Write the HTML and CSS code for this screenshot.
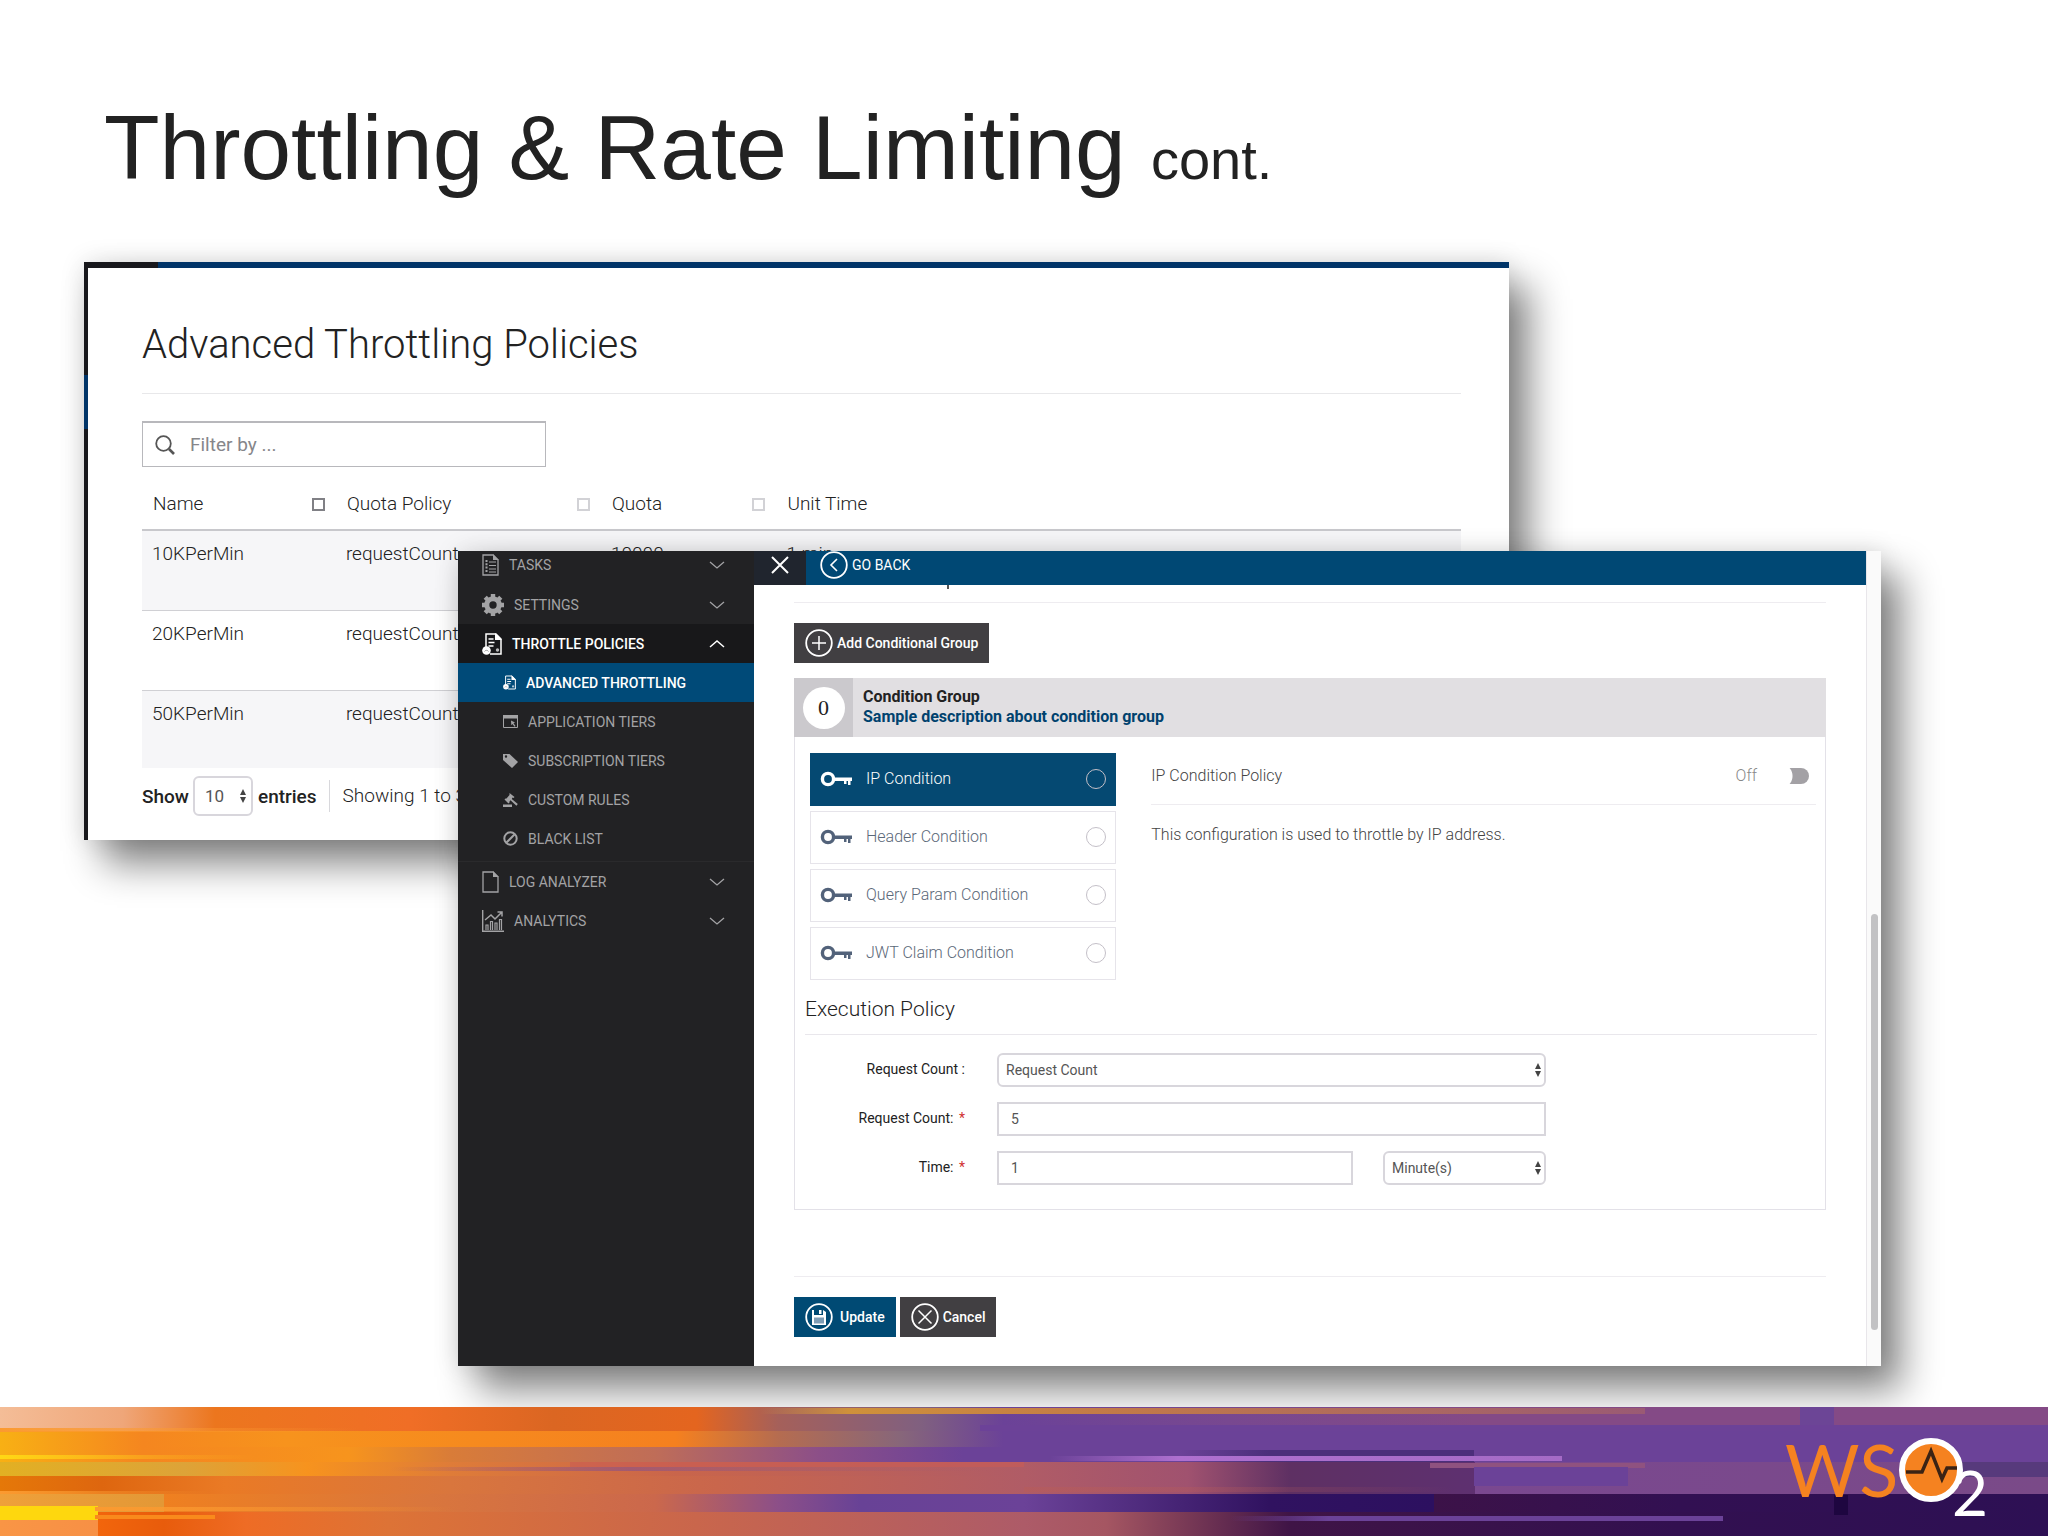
FILE: index.html
```html
<!DOCTYPE html>
<html lang="en">
<head>
    <meta charset="UTF-8">
    <meta name="viewport" content="width=device-width, initial-scale=1.0">
    <title>Throttling &amp; Rate Limiting</title>
    <link rel="stylesheet" href="styles.css">
</head>
<body>
    <!-- shared icons -->
    <svg class="defs" width="0" height="0" aria-hidden="true">
        <symbol id="down" viewBox="0 0 16 10"><path d="M1 2l7 6 7-6" fill="none" stroke="currentColor" stroke-width="1.3"/></symbol>
        <symbol id="up" viewBox="0 0 16 10"><path d="M1 8l7-6 7 6" fill="none" stroke="currentColor" stroke-width="1.5"/></symbol>
        <symbol id="updown" viewBox="0 0 8 14"><path d="M4 0l3 6H1zM4 14l3-6H1z" fill="#444"/></symbol>
        <symbol id="key" viewBox="0 0 32 16">
            <circle cx="8" cy="8" r="5.6" fill="none" stroke="currentColor" stroke-width="3.4"/>
            <path d="M14 6.500h18v3.500h-1.500v4h-2.500v-4h-1.500v3h-2.500v-3H14z" fill="currentColor"/>
        </symbol>
        <symbol id="policy" viewBox="0 0 20 22">
            <path d="M4 15V1h10l5 5v15H8" fill="none" stroke="currentColor" stroke-width="1.5"/>
            <path d="M13 0l7 7h-7z" fill="currentColor"/>
            <path d="M6.500 6h5M6.500 9.500h6M6.500 13h5" stroke="currentColor" stroke-width="1.6"/>
            <circle cx="15.500" cy="17" r="1.700" fill="currentColor" opacity=".7"/>
            <circle cx="4.500" cy="17.500" r="4.300" fill="currentColor"/>
            <path d="M2.500 18.500a2.300 2.300 0 0 1 4 0" fill="none" stroke="#888" stroke-width=".8"/>
        </symbol>
    </svg>

    <header>
        <h1>Throttling &amp; Rate Limiting <small>cont.</small></h1>
    </header>

    <main class="stage">
        <section class="window policies">
            <h2>Advanced Throttling Policies</h2>
            <div class="search">
                <svg width="20" height="20" viewBox="0 0 20 20"><circle cx="8.500" cy="8.500" r="7.300" fill="none" stroke="#555" stroke-width="1.800"/><path d="M14 14l5 5" stroke="#555" stroke-width="2.600"/></svg>
                <input type="text" aria-label="Filter" placeholder="Filter by ...">
            </div>
            <table>
                <thead>
                    <tr>
                        <th class="col-name"><div class="sort">Name <span class="box dark"></span></div></th>
                        <th class="col-policy"><div class="sort">Quota Policy <span class="box"></span></div></th>
                        <th class="col-quota"><div class="sort">Quota <span class="box"></span></div></th>
                        <th>Unit Time</th>
                    </tr>
                </thead>
                <tbody>
                    <tr><td>10KPerMin</td><td>requestCount</td><td>10000</td><td>1 min</td></tr>
                    <tr><td>20KPerMin</td><td>requestCount</td><td></td><td></td></tr>
                    <tr><td>50KPerMin</td><td>requestCount</td><td></td><td></td></tr>
                </tbody>
            </table>
            <div class="pager">
                <label for="entries">Show</label>
                <span class="select">
                    <select id="entries"><option>10</option></select>
                    <svg width="8" height="14"><use href="#updown"/></svg>
                </span>
                <span class="entries">entries</span>
                <span class="showing">Showing 1 to 3</span>
            </div>
        </section>

        <section class="window editor">
            <nav>
                <a href="#tasks" class="first">
                    <svg width="17" height="22" viewBox="0 0 17 22"><path d="M1 1h10l5 5v15H1z" fill="none" stroke="currentColor" stroke-width="1.300"/><path d="M11 0l6 6h-6z" fill="currentColor"/><path d="M7 8h7M7 11.500h7M7 15h7M7 18h7" stroke="currentColor" stroke-width="1.200"/><path d="M4.500 6v13" stroke="currentColor" stroke-width="2" stroke-dasharray="2 1.300"/></svg>
                    TASKS <svg class="arrow" width="16" height="10"><use href="#down"/></svg>
                </a>
                <a href="#settings">
                    <svg width="22" height="22" viewBox="0 0 22 22"><circle cx="11" cy="11" r="6.200" fill="none" stroke="currentColor" stroke-width="5"/><path d="M11 0v4M11 18v4M0 11h4M18 11h4M3.200 3.200l3 3M15.800 15.800l3 3M3.200 18.800l3-3M15.800 6.200l3-3" stroke="currentColor" stroke-width="4.400"/></svg>
                    SETTINGS <svg class="arrow" width="16" height="10"><use href="#down"/></svg>
                </a>
                <a href="#throttle" class="open">
                    <svg width="20" height="22"><use href="#policy"/></svg>
                    THROTTLE POLICIES <svg class="arrow" width="16" height="10"><use href="#up"/></svg>
                </a>
                <div class="submenu">
                    <a href="#advanced" class="active"><svg width="13" height="15"><use href="#policy"/></svg> ADVANCED THROTTLING</a>
                    <a href="#application"><svg width="15" height="13" viewBox="0 0 15 13"><path d="M.5.5h14v12H.5z" fill="none" stroke="currentColor"/><path d="M0 0h15v3.500H0zM8 5.500l4 2-1.500.8 2 2.700-1 .8-2-2.800-1.200 1.200z" fill="currentColor"/></svg> APPLICATION TIERS</a>
                    <a href="#subscription"><svg width="15" height="15" viewBox="0 0 15 15"><path fill-rule="evenodd" d="M0 1h6.500L15 9l-6 6L0 7zM1.800 3.500a1.200 1.200 0 1 0 2.400 0 1.200 1.200 0 1 0-2.400 0z" fill="currentColor"/></svg> SUBSCRIPTION TIERS</a>
                    <a href="#custom"><svg width="15" height="14" viewBox="0 0 15 14"><path d="M6.500 0l5 4-1 1-1-.4L8.800 6l6 5-1.400 1.700L7.500 7.300 6.500 8.400v1.200L5.500 10.500 1.500 6.500l1-1h1L6.500 2zM0 11.500h9V14H0z" fill="currentColor"/></svg> CUSTOM RULES</a>
                    <a href="#black"><svg width="15" height="15" viewBox="0 0 15 15"><circle cx="7.500" cy="7.500" r="6.200" fill="none" stroke="currentColor" stroke-width="2"/><path d="M3.500 11.500l8-8" stroke="currentColor" stroke-width="2"/></svg> BLACK LIST</a>
                </div>
                <a href="#log">
                    <svg width="17" height="22" viewBox="0 0 17 22"><path d="M1 1h10l5 5v15H1z" fill="none" stroke="currentColor" stroke-width="1.300"/><path d="M11 0l6 6h-6z" fill="currentColor"/></svg>
                    LOG ANALYZER <svg class="arrow" width="16" height="10"><use href="#down"/></svg>
                </a>
                <a href="#analytics">
                    <svg width="22" height="22" viewBox="0 0 22 22"><path d="M.7 0v21.300H22" fill="none" stroke="currentColor" stroke-width="1.400"/><path d="M4 20v-5h2v5M8.500 20V11.500h2V20M13 20v-7h2v7M17.500 20V9.500h2V20" fill="none" stroke="currentColor" stroke-width="1.200"/><path d="M3 10l6-5 4 4 7-7M15.500 2H20v4.500" fill="none" stroke="currentColor" stroke-width="1.500"/></svg>
                    ANALYTICS <svg class="arrow" width="16" height="10"><use href="#down"/></svg>
                </a>
            </nav>

            <div class="content">
                <div class="topbar">
                    <button type="button" class="close" aria-label="Close"><svg width="18" height="18" viewBox="0 0 18 18"><path d="M1 1l16 16M17 1L1 17" stroke="#fff" stroke-width="2"/></svg></button>
                    <a href="#back"><svg width="28" height="28" viewBox="0 0 28 28"><circle cx="14" cy="14" r="12.800" fill="none" stroke="#fff" stroke-width="1.800"/><path d="M17 8l-6 6 6 6" fill="none" stroke="#fff" stroke-width="1.600"/></svg>GO BACK</a>
                </div>

                <form class="page">
                    <div class="stub"><span></span></div>
                    <hr>
                    <button type="button" class="btn add"><svg width="28" height="28" viewBox="0 0 28 28"><circle cx="14" cy="14" r="12.800" fill="none" stroke="#fff" stroke-width="1.800"/><path d="M7 14h14M14 7v14" stroke="#fff" stroke-width="1.500"/></svg>Add Conditional Group</button>

                    <div class="group">
                        <div class="group-head">
                            <div class="number"><span>0</span></div>
                            <div class="group-title">
                                <h3>Condition Group</h3>
                                <p>Sample description about condition group</p>
                            </div>
                        </div>
                        <div class="conditions">
                            <div class="list">
                                <label class="item selected"><svg width="32" height="16"><use href="#key"/></svg>IP Condition<input type="radio" name="condition"></label>
                                <label class="item"><svg width="32" height="16"><use href="#key"/></svg>Header Condition<input type="radio" name="condition"></label>
                                <label class="item"><svg width="32" height="16"><use href="#key"/></svg>Query Param Condition<input type="radio" name="condition"></label>
                                <label class="item"><svg width="32" height="16"><use href="#key"/></svg>JWT Claim Condition<input type="radio" name="condition"></label>
                            </div>
                            <div class="detail">
                                <div class="detail-head">
                                    <span>IP Condition Policy</span>
                                    <label class="off">Off <input type="checkbox"></label>
                                </div>
                                <p>This configuration is used to throttle by IP address.</p>
                            </div>
                        </div>

                        <div class="execution">
                            <h4>Execution Policy</h4>
                            <div class="fields">
                                <label for="type">Request Count :</label>
                                <span class="select">
                                    <select id="type"><option>Request Count</option></select>
                                    <svg width="8" height="14"><use href="#updown"/></svg>
                                </span>
                                <label for="count">Request Count: <b>*</b></label>
                                <input type="text" id="count" value="5">
                                <label for="time">Time: <b>*</b></label>
                                <div class="time">
                                    <input type="text" id="time" value="1">
                                    <span class="select">
                                        <select aria-label="Time unit"><option>Minute(s)</option></select>
                                        <svg width="8" height="14"><use href="#updown"/></svg>
                                    </span>
                                </div>
                            </div>
                        </div>
                    </div>

                    <hr>
                    <div class="actions">
                        <button type="submit" class="btn update"><svg width="28" height="28" viewBox="0 0 28 28"><circle cx="14" cy="14" r="12.800" fill="none" stroke="#fff" stroke-width="1.800"/><path d="M7 7h2v5h9V7l3 2v13H7z" fill="#fff"/><path d="M14 7h2.500v4H14z" fill="#fff"/><path d="M9 14.500h10v6H9z" fill="#7f9db5"/></svg>Update</button>
                        <button type="button" class="btn"><svg width="28" height="28" viewBox="0 0 28 28"><circle cx="14" cy="14" r="12.800" fill="none" stroke="#fff" stroke-width="1.800"/><path d="M7.500 7.500l13 13M20.500 7.500l-13 13" stroke="#fff" stroke-width="1.500"/></svg>Cancel</button>
                    </div>
                </form>
            </div>
            <div class="scroll"><span></span></div>
        </section>
    </main>

    <footer>
        <svg class="stripes" viewBox="0 0 2048 130" preserveAspectRatio="none" aria-hidden="true">
            <defs>
                <linearGradient id="g1"><stop offset="0" stop-color="#f4bd97"/><stop offset=".06" stop-color="#efa679"/><stop offset=".105" stop-color="#ec761e"/><stop offset=".2" stop-color="#f06e26"/><stop offset=".27" stop-color="#db6622"/><stop offset=".34" stop-color="#e4651f"/><stop offset=".38" stop-color="#a5605a"/><stop offset=".45" stop-color="#806080"/><stop offset=".49" stop-color="#6b4298"/><stop offset=".6" stop-color="#784890"/><stop offset=".72" stop-color="#844a86"/><stop offset="1" stop-color="#844a86"/></linearGradient>
                <linearGradient id="g2"><stop offset="0" stop-color="#f8b014"/><stop offset=".07" stop-color="#f5861f"/><stop offset=".14" stop-color="#f7931d"/><stop offset=".33" stop-color="#f5801f"/><stop offset=".38" stop-color="#b56c50"/><stop offset=".44" stop-color="#87667a"/><stop offset=".49" stop-color="#6b4298"/><stop offset="1" stop-color="#6b4298"/></linearGradient>
                <linearGradient id="g3"><stop offset="0" stop-color="#f8b014"/><stop offset=".07" stop-color="#f5861f"/><stop offset=".17" stop-color="#f7941d"/><stop offset=".22" stop-color="#d97c38"/><stop offset=".32" stop-color="#bf6d58"/><stop offset=".4" stop-color="#8c4f88"/><stop offset=".47" stop-color="#6b4298"/><stop offset="1" stop-color="#6b4298"/></linearGradient>
                <linearGradient id="g4"><stop offset="0" stop-color="#e2b023"/><stop offset=".09" stop-color="#dda338"/><stop offset=".15" stop-color="#f7931e"/><stop offset=".22" stop-color="#df7c38"/><stop offset=".33" stop-color="#c9654b"/><stop offset=".5" stop-color="#b05c66"/><stop offset=".58" stop-color="#a0526f"/><stop offset=".63" stop-color="#5e3063"/><stop offset=".72" stop-color="#5e3070"/><stop offset=".72" stop-color="#7a4890"/><stop offset="1" stop-color="#7a4a88"/></linearGradient>
                <linearGradient id="g5"><stop offset="0" stop-color="#e57808"/><stop offset=".05" stop-color="#de660f"/><stop offset=".11" stop-color="#ea7a25"/><stop offset=".22" stop-color="#d9763d"/><stop offset=".35" stop-color="#c9664c"/><stop offset=".5" stop-color="#b05c66"/><stop offset=".58" stop-color="#a0526f"/><stop offset=".63" stop-color="#5e3063"/><stop offset=".72" stop-color="#5e3070"/><stop offset=".72" stop-color="#7a4890"/><stop offset="1" stop-color="#7a4a88"/></linearGradient>
                <linearGradient id="g6"><stop offset="0" stop-color="#efa03a"/><stop offset=".08" stop-color="#e39836"/><stop offset=".08" stop-color="#ef8020"/><stop offset=".21" stop-color="#d9763d"/><stop offset=".32" stop-color="#cb684c"/><stop offset=".38" stop-color="#8c4f88"/><stop offset=".42" stop-color="#684296"/><stop offset=".5" stop-color="#6b4298"/><stop offset=".62" stop-color="#301260"/><stop offset=".7" stop-color="#2c1060"/><stop offset=".7" stop-color="#3c1248"/><stop offset=".82" stop-color="#321052"/><stop offset="1" stop-color="#2d1054"/></linearGradient>
                <linearGradient id="g7"><stop offset="0" stop-color="#f99545"/><stop offset=".048" stop-color="#f79045"/><stop offset=".048" stop-color="#f2650c"/><stop offset=".08" stop-color="#e85c0c"/><stop offset=".12" stop-color="#ee6c25"/><stop offset=".19" stop-color="#dd7336"/><stop offset=".34" stop-color="#c9664c"/><stop offset=".5" stop-color="#ad5b68"/><stop offset=".54" stop-color="#a55662"/><stop offset=".63" stop-color="#3f1446"/><stop offset=".82" stop-color="#321050"/><stop offset="1" stop-color="#2d1054"/></linearGradient>
                <linearGradient id="top"><stop offset="0" stop-color="#d8953a" stop-opacity="0"/><stop offset=".1" stop-color="#cf913a"/><stop offset=".4" stop-color="#c27a48"/><stop offset="1" stop-color="#9a5a74"/></linearGradient>
                <linearGradient id="lilac"><stop offset="0" stop-color="#ae70cf" stop-opacity="0"/><stop offset=".25" stop-color="#ae70cf"/><stop offset="1" stop-color="#a56bc6"/></linearGradient>
                <linearGradient id="violet"><stop offset="0" stop-color="#6b4298" stop-opacity="0"/><stop offset=".2" stop-color="#6b4298"/></linearGradient>
                <linearGradient id="shade"><stop offset="0" stop-color="#4c2f7b" stop-opacity="0"/><stop offset=".3" stop-color="#4c2f7b"/></linearGradient>
                <linearGradient id="glow"><stop offset="0" stop-color="#fb9a30"/><stop offset="1" stop-color="#fb9a30" stop-opacity="0"/></linearGradient>
                <linearGradient id="gold"><stop offset="0" stop-color="#ffd814"/><stop offset="1" stop-color="#ffb020" stop-opacity="0"/></linearGradient>
                <linearGradient id="mauve"><stop offset="0" stop-color="#a35a70" stop-opacity="0"/><stop offset=".4" stop-color="#a35a70"/><stop offset="1" stop-color="#a35a70" stop-opacity="0"/></linearGradient>
                <linearGradient id="rust"><stop offset="0" stop-color="#b85c58" stop-opacity=".5"/><stop offset="1" stop-color="#b85c58" stop-opacity="0"/></linearGradient>
            </defs>
            <rect width="2048" height="24" fill="url(#g1)"/>
            <rect x="1800" width="34" height="24" fill="#6c4596"/>
            <rect x="760" y="1" width="885" height="6" fill="url(#top)"/>
            <rect x="980" y="18" width="1068" height="8" fill="#6c4298"/>
            <rect y="24" width="2048" height="17" fill="url(#g2)"/>
            <rect y="21" width="360" height="4" fill="url(#glow)"/>
            <rect y="40" width="2048" height="16" fill="url(#g3)"/>
            <rect y="48" width="255" height="4" fill="url(#gold)"/>
            <rect y="55" width="2048" height="15" fill="url(#g4)"/>
            <rect x="570" y="55" width="454" height="5" fill="#c95c55" opacity=".6"/>
            <rect x="390" y="60" width="600" height="4" fill="url(#mauve)"/>
            <rect y="69" width="2048" height="18" fill="url(#g5)"/>
            <rect y="84" width="210" height="3" fill="url(#glow)"/>
            <rect y="87" width="2048" height="19" fill="url(#g6)"/>
            <rect y="105" width="2048" height="25" fill="url(#g7)"/>
            <rect y="99" width="98" height="14" fill="#fed70e"/>
            <rect x="95" y="100" width="360" height="4" fill="url(#glow)"/>
            <rect x="95" y="108" width="120" height="4" fill="#f98a1c"/>
            <rect x="1180" y="43" width="294" height="12" fill="url(#shade)"/>
            <rect x="1050" y="49" width="512" height="5" fill="url(#lilac)"/>
            <rect x="1430" y="56" width="215" height="5" fill="#8f5280"/>
            <rect x="1474" y="60" width="154" height="19" fill="#6b4298"/>
            <rect x="1900" y="55" width="148" height="15" fill="#573a7c"/>
            <rect x="1024" y="80" width="430" height="5" fill="url(#rust)"/>
            <rect x="1230" y="109" width="493" height="5" fill="url(#violet)"/>
            <rect x="1834" y="88" width="14" height="20" fill="#1e0640"/>
        </svg>
        <svg class="logo" width="204" height="90" viewBox="0 0 204 90" role="img" aria-label="WSO2">
            <text class="brand" x="1" y="66">WS</text>
            <circle cx="147" cy="39" r="29" fill="#f58220" stroke="#fff" stroke-width="6"/>
            <path d="M122 41h16l9-21 11 28 5-11h10" fill="none" stroke="#3b2314" stroke-width="3.500"/>
            <text class="two" x="168" y="85">2</text>
        </svg>
    </footer>
</body>
</html>
```
FILE: styles.css
```css
* {
    box-sizing: border-box;
}

body {
    font-family: Roboto, "Liberation Sans", sans-serif;
    background-color: white;
    color: #222;
    margin: 0;
    min-height: 100vh;
    display: flex;
    flex-direction: column;
}

h1, h2, h3, h4, p {
    margin: 0;
    font-weight: normal;
}

button, input, select {
    font-family: inherit;
    color: inherit;
}

a {
    color: inherit;
    text-decoration: none;
}

svg {
    flex: none;
}

hr {
    border: 0;
    border-top: 1px solid #eeecf0;
    margin: 0;
}

.defs {
    position: absolute;
}

header {
    padding: 96px 104px 50px;
}

h1 {
    font-family: "Liberation Sans", Arial, sans-serif;
    font-size: 91px;
    line-height: 104px;
}

h1 small {
    font-size: 56px;
}

/* the two windows share a grid and overlap in the middle cell */
.stage {
    display: grid;
    grid-template-columns: minmax(0, 84fr) minmax(0, 374fr) minmax(0, 1051fr) minmax(0, 372fr) minmax(0, 167fr);
    grid-template-rows: 289px 289px auto;
    margin-bottom: 41px;
}

.window {
    box-shadow: 20px 24px 36px rgba(0, 0, 0, 0.48), 0 0 24px rgba(0, 0, 0, 0.12);
}

.policies {
    grid-area: 1 / 2 / 3 / 4;
    padding: 58px 48px 0 58px;
    background:
        linear-gradient(#18181c, #18181c) 0 0 / 74px 6px no-repeat,
        linear-gradient(#003468, #003468) 0 0 / 100% 6px no-repeat,
        linear-gradient(#003468, #003468) 0 113px / 4px 54px no-repeat,
        linear-gradient(#18181c, #18181c) 0 0 / 4px 100% no-repeat,
        white;
}

h2 {
    font-size: 40px;
    line-height: 50px;
    font-weight: 300;
    padding-bottom: 23px;
    border-bottom: 1px solid #e8e8ea;
}

.search {
    display: flex;
    align-items: center;
    width: 404px;
    height: 46px;
    margin: 27px 0 11px;
    padding-left: 12px;
    border: 1px solid #b8b8bc;
    border-top-width: 2px;
}

.search input {
    flex: 1;
    height: 42px;
    border: 0;
    padding: 0 15px;
    font-size: 19px;
    background: none;
}

.search input::placeholder {
    color: #86868a;
    opacity: 1;
}

table {
    width: 100%;
    table-layout: fixed;
    border-collapse: collapse;
    font-size: 19px;
    font-weight: 300;
    line-height: 22px;
}

th {
    height: 52px;
    padding: 1px 11px 0;
    font-weight: 300;
    text-align: left;
    border-bottom: 2px solid #c8c8cc;
}

.col-name {
    width: 14.7%;
}

.col-policy {
    width: 20.1%;
}

.col-quota {
    width: 13.3%;
}

.sort {
    display: flex;
    align-items: center;
    justify-content: space-between;
}

.box {
    width: 13px;
    height: 13px;
    border: 2px solid #d2d2d6;
}

.box.dark {
    border-color: #808085;
}

td {
    height: 80px;
    padding: 12px 10px 0;
    vertical-align: top;
    border-bottom: 1px solid #d0d0d4;
}

tbody tr:nth-child(odd) {
    background-color: #f6f6f8;
}

tbody tr:last-child td {
    height: 78px;
    border-bottom: 0;
}

.pager {
    display: flex;
    align-items: center;
    height: 56px;
    font-size: 19px;
    white-space: nowrap;
}

.pager label, .entries {
    font-weight: 500;
}

.select {
    position: relative;
    display: block;
}

.select svg {
    position: absolute;
    right: 4px;
    top: 50%;
    margin-top: -7px;
    pointer-events: none;
}

select {
    appearance: none;
    display: block;
    width: 100%;
    height: 34px;
    padding: 0 7px;
    border: 2px solid #d8d6dc;
    border-radius: 6px;
    background: white;
    font-size: 14px;
    color: #555;
}

.pager .select {
    margin: 0 5px 0 4px;
}

.pager select {
    width: 60px;
    height: 40px;
    padding: 0 10px;
    font-size: 17px;
}

.pager .select svg {
    right: 6px;
}

.showing {
    margin-left: 12px;
    padding-left: 13px;
    line-height: 32px;
    font-weight: 300;
    border-left: 1px solid #d8d8dc;
}

.editor {
    grid-area: 2 / 3 / 4 / 5;
    display: flex;
    background-color: white;
    position: relative;
}

nav {
    flex: 0 0 296px;
    background-color: #222224;
    color: #a3a3a5;
    font-size: 14px;
}

nav a {
    display: flex;
    align-items: center;
    gap: 10px;
    height: 39px;
    padding: 0 29px 0 24px;
    white-space: nowrap;
}

nav a.first {
    height: 34px;
    padding-bottom: 6px;
}

nav .arrow {
    margin-left: auto;
}

nav .open {
    background-color: #18181a;
    color: white;
    font-weight: 500;
}

.submenu {
    padding-bottom: 3px;
    border-bottom: 1px solid #2a2a2c;
}

.submenu a {
    padding-left: 45px;
}

.submenu .active {
    background-color: #004a78;
    color: white;
    font-weight: 500;
}

.content {
    flex: 1;
    min-width: 0;
}

.topbar {
    display: flex;
    height: 34px;
    background-color: #004874;
    color: white;
    font-size: 14px;
}

.topbar a {
    display: flex;
    align-items: center;
    gap: 4px;
    padding: 0 14px 6px;
}

.close {
    width: 52px;
    padding: 0 0 6px;
    border: 0;
    background-color: #20252e;
}

.close svg {
    display: block;
    margin: 0 auto;
}

.page {
    padding: 0 40px 29px;
}

.stub {
    height: 17px;
    padding-left: 153px;
}

.stub span {
    display: block;
    width: 2px;
    height: 4px;
    background-color: #555;
}

.btn {
    display: flex;
    align-items: center;
    gap: 4px;
    height: 40px;
    padding: 0 11px;
    border: 0;
    background-color: #413f42;
    color: white;
    font-size: 14px;
    font-weight: 500;
}

.btn.update {
    gap: 7px;
    background-color: #004a74;
}

.btn.add {
    margin: 20px 0 15px;
}

.group {
    margin-bottom: 66px;
    border: 1px solid #e3e1e8;
    border-top: 0;
}

.group-head {
    display: flex;
    align-items: center;
    gap: 10px;
    height: 59px;
    margin: 0 -1px;
    background-color: #e1dfe2;
}

.group-title {
    padding-bottom: 2px;
    line-height: 20px;
}

.group-title h3, .group-title p {
    font-size: 16px;
    font-weight: 700;
}

.group-title p {
    color: #00426e;
}

.number {
    display: flex;
    align-items: center;
    justify-content: center;
    width: 59px;
    height: 59px;
    background-color: #cbc9cd;
}

.number span {
    width: 42px;
    border-radius: 50%;
    background-color: white;
    font-family: "Liberation Serif", serif;
    font-size: 22px;
    line-height: 42px;
    text-align: center;
}

.conditions {
    display: grid;
    grid-template-columns: minmax(0, 306fr) minmax(0, 664fr);
    gap: 35px;
    padding: 16px 9px 16px 15px;
}

.list {
    display: flex;
    flex-direction: column;
    gap: 5px;
}

.item {
    display: flex;
    align-items: center;
    gap: 14px;
    height: 53px;
    padding: 0 9px 2px;
    border: 1px solid #e6e4ea;
    color: #5b6878;
    font-size: 16px;
    font-weight: 300;
}

.item svg {
    color: #52627a;
}

.item.selected {
    border-color: #054972;
    background-color: #054972;
    color: white;
}

.item.selected svg {
    color: white;
}

.item input {
    appearance: none;
    width: 20px;
    height: 20px;
    margin: 0 0 0 auto;
    border: 1px solid #c4c0c8;
    border-radius: 50%;
}

.detail {
    color: #444;
    font-size: 16px;
    line-height: 22px;
    font-weight: 300;
}

.detail-head {
    display: flex;
    justify-content: space-between;
    padding: 12px 7px 17px 0;
    border-bottom: 1px solid #eeecf0;
}

.detail p {
    padding-top: 19px;
    font-weight: 300;
}

.off {
    display: flex;
    align-items: center;
    gap: 32px;
    color: #888;
}

/* only the knob's right half shows when the switch is off */
.off input {
    appearance: none;
    width: 20px;
    height: 16px;
    margin: 0;
    border-radius: 0 8px 8px 0;
    background: radial-gradient(circle at -9px 8px, transparent 12px, #a3a1a5 13px);
}

.execution {
    padding: 0 8px 24px 10px;
}

h4 {
    font-size: 21px;
    line-height: 26px;
    font-weight: 300;
    padding-bottom: 12px;
    border-bottom: 1px solid #e9e7ec;
}

.fields {
    display: grid;
    grid-template-columns: minmax(0, 160fr) minmax(0, 549fr) minmax(0, 239fr);
    column-gap: 32px;
    row-gap: 15px;
    padding-top: 18px;
}

.fields > label {
    grid-column: 1;
    font-size: 14px;
    line-height: 32px;
    text-align: right;
    white-space: nowrap;
}

.fields b {
    margin-left: 2px;
    color: #d03030;
    font-weight: 400;
}

.fields input {
    width: 100%;
    height: 34px;
    padding: 0 12px;
    border: 2px solid #d8d6dc;
    font-size: 14px;
    color: #555;
}

.time {
    display: grid;
    grid-template-columns: minmax(0, 356fr) minmax(0, 163fr);
    gap: 30px;
}

.actions {
    display: flex;
    gap: 4px;
    padding-top: 20px;
}

.scroll {
    flex: 0 0 15px;
    padding: 363px 3px 0 4px;
    border-left: 1px solid #e8e6ea;
    background-color: #fafafa;
}

.scroll span {
    display: block;
    height: 416px;
    border-radius: 4px;
    background-color: #c2c2c4;
}

footer {
    position: relative;
    flex: 1;
    display: flex;
    justify-content: flex-end;
    min-height: 130px;
    padding: 24px 60px 0 0;
}

.stripes {
    position: absolute;
    top: 0;
    left: 0;
    width: 100%;
    height: 100%;
}

.logo {
    position: relative;
}

.brand {
    font-family: Lato, sans-serif;
    font-size: 72px;
    fill: #f58220;
}

.two {
    font-family: Lato, sans-serif;
    font-size: 62px;
    fill: white;
}
```
